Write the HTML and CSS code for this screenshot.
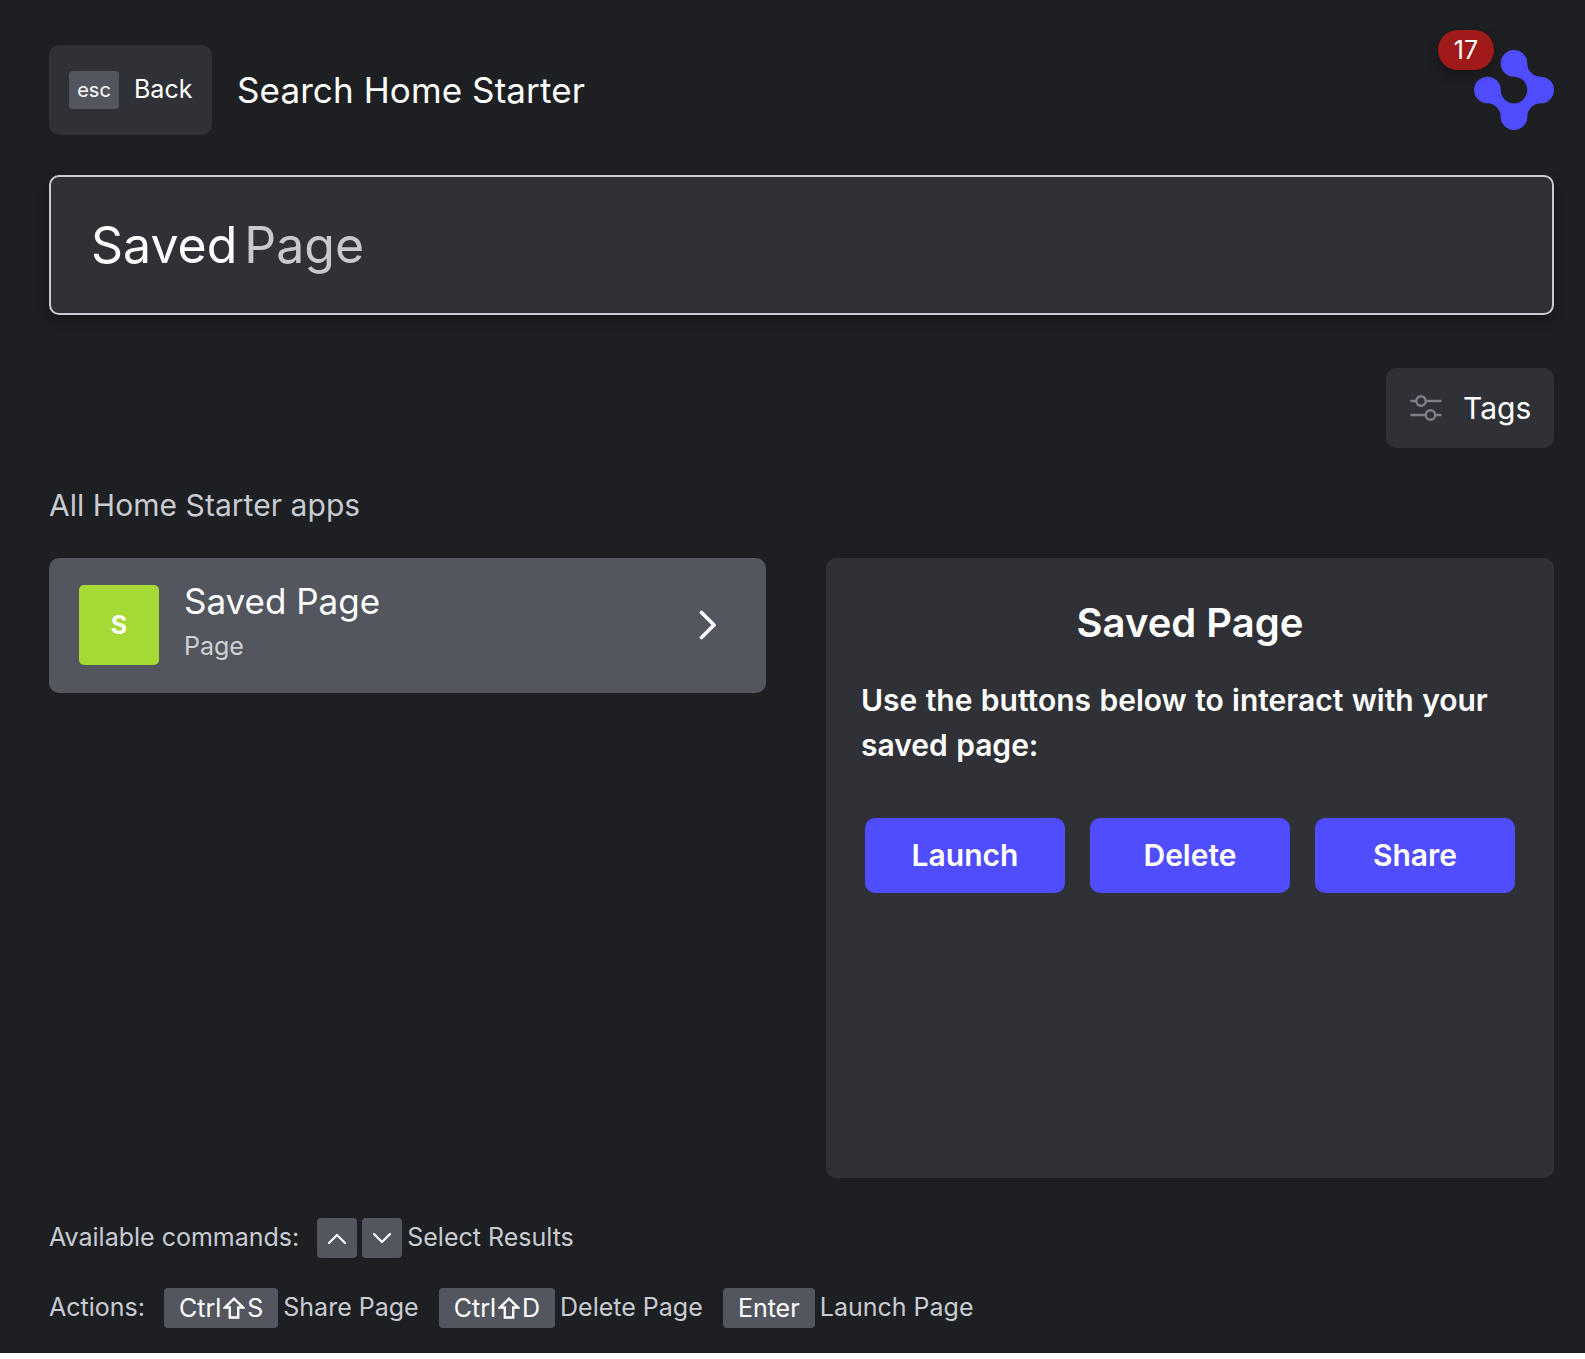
FILE: index.html
```html
<!DOCTYPE html>
<html lang="en">
<head>
<meta charset="utf-8">
<title>Search Home Starter</title>
<link rel="stylesheet" href="styles.css">
</head>
<body>
<div class="app">
  <header class="header">
    <button class="back"><kbd class="esc">esc</kbd><span class="back-label">Back</span></button>
    <h1 class="title">Search Home Starter</h1>
    <div class="brand">
      <svg class="logo" viewBox="0 0 80 80">
        <path fill-rule="evenodd" d="M40 0A13.3 13.3 0 0 1 53.3 13.3A13.3 13.3 0 0 0 66.7 26.7A13.3 13.3 0 0 1 66.7 53.3A13.3 13.3 0 0 0 53.3 66.7A13.3 13.3 0 0 1 26.7 66.7A13.3 13.3 0 0 0 13.3 53.3A13.3 13.3 0 1 1 26.7 40A13.3 13.3 0 1 0 40 26.7A13.3 13.3 0 0 1 40 0Z"/>
      </svg>
      <span class="badge">17</span>
    </div>
  </header>

  <div class="search"><span class="typed">Saved</span><span class="hint">Page</span></div>

  <div class="filters">
    <button class="tags">
      <svg class="tags-icon" viewBox="0 0 32 26"><path d="M1.5 6H6M16 6H30.5M1.5 20H15.500M25 20H30.500"/><circle cx="11" cy="6" r="4.700"/><circle cx="20.500" cy="20" r="4.700"/></svg>
      <span>Tags</span>
    </button>
  </div>

  <h2 class="section">All Home Starter apps</h2>

  <main class="content">
    <div class="results">
      <div class="result">
        <div class="avatar">S</div>
        <div class="result-text">
          <div class="result-name">Saved Page</div>
          <div class="result-type">Page</div>
        </div>
        <svg class="chevron" viewBox="0 0 18 30"><path d="M2.500 2.500L15 15L2.500 27.500"/></svg>
      </div>
    </div>
    <section class="detail">
      <h3 class="detail-title">Saved Page</h3>
      <p class="detail-text">Use the buttons below to interact with your saved page:</p>
      <div class="actions">
        <button class="action">Launch</button>
        <button class="action">Delete</button>
        <button class="action">Share</button>
      </div>
    </section>
  </main>

  <footer class="footer">
    <div class="commands">
      <span class="lead lead-wide">Available commands:</span>
      <span class="command">
        <kbd class="key key-icon"><svg class="arrow" viewBox="0 0 18 11"><path d="M1 10L9 2L17 10"/></svg></kbd>
        <kbd class="key key-icon"><svg class="arrow" viewBox="0 0 18 11"><path d="M1 1L9 9L17 1"/></svg></kbd>
        <span class="label">Select Results</span>
      </span>
    </div>
    <div class="commands">
      <span class="lead">Actions:</span>
      <span class="command"><kbd class="key key-combo">Ctrl<svg class="shift" viewBox="0 0 22 22"><path d="M11 1.700L20 10.500H15.200V20.500H6.800V10.500H2Z"/></svg>S</kbd><span class="label">Share Page</span></span>
      <span class="command"><kbd class="key key-combo">Ctrl<svg class="shift" viewBox="0 0 22 22"><path d="M11 1.700L20 10.500H15.200V20.500H6.800V10.500H2Z"/></svg>D</kbd><span class="label">Delete Page</span></span>
      <span class="command"><kbd class="key key-enter">Enter</kbd><span class="label">Launch Page</span></span>
    </div>
  </footer>
</div>
</body>
</html>
```
FILE: styles.css
```css
* { box-sizing: border-box; }

body {
  margin: 0;
  background: #fff;
  font-family: Inter, "Liberation Sans", sans-serif;
  color: #fff;
}

h1, h2, h3, p { margin: 0; font-weight: 400; }
button { border: 0; margin: 0; padding: 0; font: inherit; color: inherit; }
kbd { font-family: inherit; }
svg { display: block; flex: none; fill: none; stroke-linecap: round; stroke-linejoin: round; }

.app {
  height: 1353px;
  padding: 45px 31px 25px 49px;
  background: #1e1f23;
  display: flex;
  flex-direction: column;
}

.header { display: flex; align-items: center; height: 90px; }
.back {
  display: flex;
  align-items: center;
  gap: 15px;
  width: 163px;
  height: 90px;
  padding-left: 20px;
  border-radius: 10px;
  background: #2f3136;
  font-size: 25px;
}
.back-label { padding-bottom: 2px; }
.esc {
  width: 50px;
  height: 38px;
  border-radius: 4px;
  background: #53565f;
  font-size: 20px;
  line-height: 38px;
  text-align: center;
}
.title { margin-left: 25px; font-size: 35px; line-height: 44px; letter-spacing: .1px; }
.brand { position: relative; margin-left: auto; width: 80px; height: 80px; }
.logo { width: 80px; height: 80px; fill: #504cff; }
.badge {
  position: absolute;
  top: -20px;
  left: -36px;
  width: 56px;
  height: 40px;
  border-radius: 20px;
  background: #a11a1a;
  box-shadow: 0 5px 12px rgba(0, 0, 0, .3);
  font-size: 25px;
  line-height: 40px;
  text-align: center;
}

.search {
  display: flex;
  align-items: center;
  gap: 7px;
  height: 140px;
  margin-top: 40px;
  padding-left: 40px;
  border: 2px solid #c9cbd2;
  border-radius: 10px;
  background: #2f3136;
  box-shadow: 0 5px 12px rgba(0, 0, 0, .3);
  font-size: 50px;
}
.hint { color: #c8c9ce; }

.filters { display: flex; justify-content: flex-end; margin-top: 53px; }
.tags {
  display: flex;
  align-items: center;
  gap: 21px;
  width: 168px;
  height: 80px;
  padding-left: 24px;
  border-radius: 10px;
  background: #2f3136;
  font-size: 30px;
}
.tags-icon { width: 32px; height: 26px; stroke: #7d808a; stroke-width: 2.4; }

.section { margin-top: 35px; font-size: 30px; line-height: 45px; color: #c9cbd2; letter-spacing: .05px; }

.content {
  display: grid;
  grid-template-columns: 717px 728px;
  gap: 60px;
  height: 620px;
  margin-top: 30px;
}
.result {
  display: flex;
  align-items: center;
  height: 135px;
  padding: 0 49px 2px 30px;
  border-radius: 10px;
  background: #53565f;
}
.avatar {
  width: 80px;
  height: 80px;
  border-radius: 5px;
  background: #a5d934;
  font-size: 25px;
  font-weight: 700;
  line-height: 80px;
  text-align: center;
}
.result-text { flex: 1; margin-left: 25px; padding-bottom: 2px; }
.result-name { font-size: 35px; line-height: 45px; }
.result-type { font-size: 25px; line-height: 44px; color: #d0d0d2; }
.chevron { width: 18px; height: 30px; stroke: #fff; stroke-width: 3.6; }

.detail { padding: 35px; border-radius: 10px; background: #2f3136; }
.detail-title { font-size: 40px; font-weight: 600; line-height: 60px; text-align: center; }
.detail-text { margin-top: 25px; font-size: 30px; font-weight: 600; line-height: 45px; word-spacing: .85px; }
.actions { display: flex; justify-content: center; gap: 25px; margin-top: 50px; }
.action {
  width: 200px;
  height: 75px;
  padding-bottom: 2px;
  border-radius: 10px;
  background: #504cff;
  font-size: 30px;
  font-weight: 600;
}

.footer {
  display: flex;
  flex-direction: column;
  gap: 30px;
  margin-top: 40px;
  font-size: 25px;
  color: #c9cbd2;
}
.commands { display: flex; align-items: center; gap: 20px; height: 40px; }
.command { display: flex; align-items: center; gap: 5px; }
.lead, .label { padding-bottom: 2px; }
.lead { margin-right: -1px; }
.lead-wide { margin-right: -2px; }
.key {
  display: flex;
  align-items: center;
  justify-content: center;
  height: 40px;
  border-radius: 4px;
  background: #53565f;
  color: #fff;
}
.key-combo { padding: 0 15px; }
.key-enter { width: 92px; }
.key-icon { width: 40px; }
.arrow { width: 18px; height: 11px; stroke: #fff; stroke-width: 2.200; }
.shift { width: 22px; height: 22px; margin: 0 2px; stroke: #fff; stroke-width: 2.400; stroke-linejoin: miter; }
```
